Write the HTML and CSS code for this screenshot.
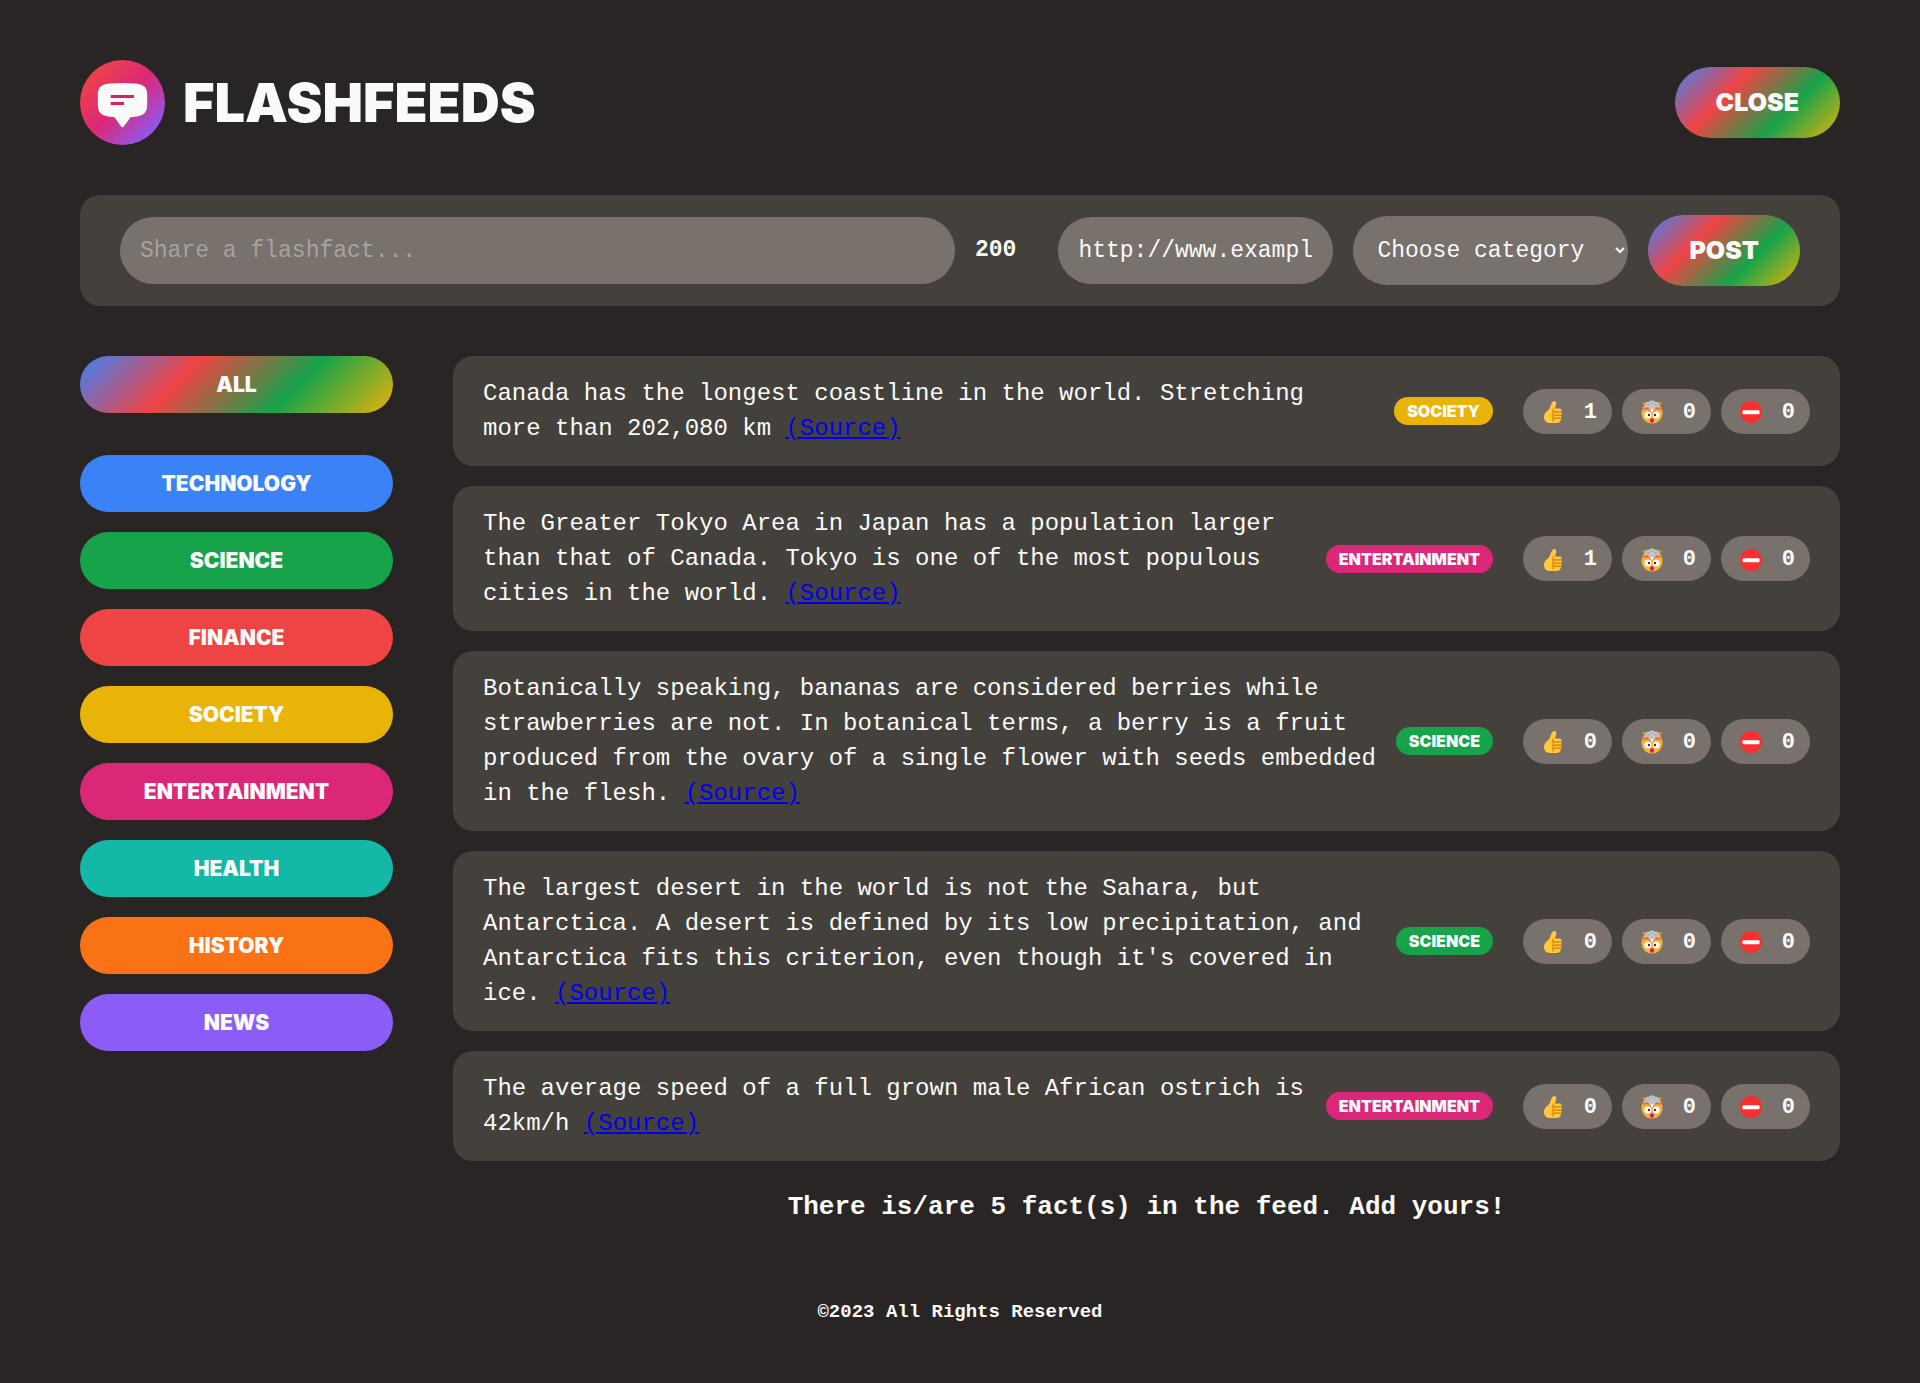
FILE: index.html
```html
<!DOCTYPE html>
<html lang="en">
<head>
<meta charset="utf-8">
<meta name="viewport" content="width=device-width, initial-scale=1">
<title>Flashfeeds</title>
<link rel="stylesheet" href="styles.css">
</head>
<body>
<svg class="sprite" width="0" height="0" aria-hidden="true">
  <defs>
    <symbol id="thumb" viewBox="0 0 22 24">
      <path d="M11.5 1.2c1.6-.6 3 .5 2.8 2.4-.2 1.900-.9 3.300-1.400 4.900h4.700c1.500 0 2.200 1 2 2.100 0 .6-.3 1-.6 1.300.6.400.9 1 .8 1.700-.1.700-.4 1.200-.8 1.500.4.500.6 1 .5 1.600-.1.700-.5 1.100-.9 1.400.3.500.4 1 .3 1.500-.3 1.500-1.200 3.400-3.600 3.400H8c-4 0-6-2.600-6-6 0-3.200 1.500-4.900 3.900-6.500C8.700 8.500 8.500 2.300 11.500 1.200z" fill="#ffc83d"/>
      <path d="M11 8.500v13M11 11.900h8M11 15.100h8M11 18.100h7.500" fill="none" stroke="#d67d00" stroke-width="1.100"/>
    </symbol>
    <symbol id="mindblown" viewBox="0 0 24 24">
      <path d="M1.500 12.500C1.500 9 3 8 4.500 8h15c1.500 0 3 1 3 4.500C22.500 19 18 23.500 12 23.500S1.500 19 1.500 12.500z" fill="#ffb02e"/>
      <path d="M3 10.800C5 8.500 8.500 8.500 10.500 12L12 11l1.500 1c2-3.500 5.500-3.500 7.500-1.200L19.500 8h-15z" fill="#f3602f"/>
      <path d="M2.500 2.500h3v2.500h-2zM18.500 2.500h3l-1 3h-2zM2.500 6.500h3v1.500h-3zM18.500 6.500h3v1.500h-3z" fill="#f59b23"/>
      <path d="M8.500 9.500c.5-1.500.5-2-1-2H5.500C3.500 7.500 3.500 5 5.500 4.500 5 2.500 7 1.500 8.500 2 9.500 0 14 0 15.500 2c1.600-.6 3.600.5 3 2.500 2 .5 2 3 0 3h-2c-1.500 0-1.500.5-1 2-1.500 1-5.500 1-7 0z" fill="#c4c4c4"/>
      <path d="M7 5c1-1 2-1 3 0M11 3.500c1-1 2-1 3 0M14 5.500c1-1 2-1 3 0" fill="none" stroke="#9b9b9b"/>
      <circle cx="12" cy="10.500" r="1.400" fill="#fff"/>
      <circle cx="7.800" cy="15" r="3.500" fill="#fff"/>
      <circle cx="16.200" cy="15" r="3.500" fill="#fff"/>
      <circle cx="9" cy="15" r="1.200" fill="#402a32"/>
      <circle cx="15" cy="15" r="1.200" fill="#402a32"/>
      <ellipse cx="12" cy="20.500" rx="2" ry="2.200" fill="#bb1d80"/>
    </symbol>
    <symbol id="noentry" viewBox="0 0 24 24">
      <circle cx="12" cy="12" r="11" fill="#f92f2f"/>
      <rect x="3.500" y="10.200" width="17" height="4" rx="1" fill="#fff"/>
    </symbol>
  </defs>
</svg>

<header class="header">
  <div class="brand">
    <svg class="logo" viewBox="0 0 85 85" role="img" aria-label="Flashfeeds logo">
      <defs>
        <linearGradient id="logo-fill" x1="0" y1="0" x2="1" y2="1">
          <stop offset="0.12" stop-color="#ef4444"/>
          <stop offset="0.5" stop-color="#db2777"/>
          <stop offset="0.88" stop-color="#8b5cf6"/>
        </linearGradient>
      </defs>
      <circle cx="42.500" cy="42.500" r="42.500" fill="url(#logo-fill)"/>
      <path d="M29 23.500Q42.500 22.300 56 23.500Q67.200 24.500 67.200 34V45Q67.200 55.500 57 56.600L50.500 57.200L44 66.300Q42.500 68 41 66.300L34.500 57.200L28 56.600Q17.800 55.500 17.800 45V34Q17.800 24.500 29 23.500Z" fill="#fafaf9"/>
      <path d="M30.700 36.500H54M30.700 43.500H44" stroke="#db1f6b" stroke-width="3.200"/>
    </svg>
    <h1 class="title">FLASHFEEDS</h1>
  </div>
  <button class="btn btn-large rainbow" type="button">CLOSE</button>
</header>

<form class="fact-form">
  <input class="field field-fact" type="text" aria-label="Fact" placeholder="Share a flashfact...">
  <span class="count">200</span>
  <input class="field field-side" type="text" aria-label="Source link" value="http://www.example.com">
  <select class="field field-side field-select" aria-label="Category">
    <option>Choose category</option>
    <option>Technology</option>
    <option>Science</option>
    <option>Finance</option>
    <option>Society</option>
    <option>Entertainment</option>
    <option>Health</option>
    <option>History</option>
    <option>News</option>
  </select>
  <button class="btn btn-large rainbow" type="button">POST</button>
</form>

<div class="content">
  <nav aria-label="Categories">
    <ul class="categories">
      <li class="all"><button class="btn btn-category rainbow" type="button">ALL</button></li>
      <li><button class="btn btn-category technology" type="button">TECHNOLOGY</button></li>
      <li><button class="btn btn-category science" type="button">SCIENCE</button></li>
      <li><button class="btn btn-category finance" type="button">FINANCE</button></li>
      <li><button class="btn btn-category society" type="button">SOCIETY</button></li>
      <li><button class="btn btn-category entertainment" type="button">ENTERTAINMENT</button></li>
      <li><button class="btn btn-category health" type="button">HEALTH</button></li>
      <li><button class="btn btn-category history" type="button">HISTORY</button></li>
      <li><button class="btn btn-category news" type="button">NEWS</button></li>
    </ul>
  </nav>

  <main>
    <ul class="facts">
      <li class="fact">
        <p class="fact-text">Canada has the longest coastline in the world. Stretching more&nbsp;than 202,080 km <a href="#">(Source)</a></p>
        <span class="tag society">SOCIETY</span>
        <div class="votes">
          <button class="vote" type="button"><svg><use href="#thumb"/></svg>1</button>
          <button class="vote" type="button"><svg><use href="#mindblown"/></svg>0</button>
          <button class="vote" type="button"><svg><use href="#noentry"/></svg>0</button>
        </div>
      </li>
      <li class="fact">
        <p class="fact-text">The Greater Tokyo Area in Japan has a population larger than that of Canada. Tokyo is one of the most populous cities in the world. <a href="#">(Source)</a></p>
        <span class="tag entertainment">ENTERTAINMENT</span>
        <div class="votes">
          <button class="vote" type="button"><svg><use href="#thumb"/></svg>1</button>
          <button class="vote" type="button"><svg><use href="#mindblown"/></svg>0</button>
          <button class="vote" type="button"><svg><use href="#noentry"/></svg>0</button>
        </div>
      </li>
      <li class="fact">
        <p class="fact-text">Botanically speaking, bananas are considered berries while strawberries are not. In botanical terms, a berry is a fruit produced from the ovary of a single flower with seeds embedded in the flesh. <a href="#">(Source)</a></p>
        <span class="tag science">SCIENCE</span>
        <div class="votes">
          <button class="vote" type="button"><svg><use href="#thumb"/></svg>0</button>
          <button class="vote" type="button"><svg><use href="#mindblown"/></svg>0</button>
          <button class="vote" type="button"><svg><use href="#noentry"/></svg>0</button>
        </div>
      </li>
      <li class="fact">
        <p class="fact-text">The largest desert in the world is not the Sahara, but Antarctica. A desert is defined by its low precipitation, and Antarctica fits this criterion, even though it's covered in ice. <a href="#">(Source)</a></p>
        <span class="tag science">SCIENCE</span>
        <div class="votes">
          <button class="vote" type="button"><svg><use href="#thumb"/></svg>0</button>
          <button class="vote" type="button"><svg><use href="#mindblown"/></svg>0</button>
          <button class="vote" type="button"><svg><use href="#noentry"/></svg>0</button>
        </div>
      </li>
      <li class="fact">
        <p class="fact-text">The average speed of a full grown male African ostrich is 42km/h <a href="#">(Source)</a></p>
        <span class="tag entertainment">ENTERTAINMENT</span>
        <div class="votes">
          <button class="vote" type="button"><svg><use href="#thumb"/></svg>0</button>
          <button class="vote" type="button"><svg><use href="#mindblown"/></svg>0</button>
          <button class="vote" type="button"><svg><use href="#noentry"/></svg>0</button>
        </div>
      </li>
    </ul>
    <p class="summary">There is/are 5 fact(s) in the feed. Add yours!</p>
  </main>
</div>

<footer class="footer">©2023 All Rights Reserved</footer>
</body>
</html>
```
FILE: styles.css
```css
*,
*::before,
*::after {
  box-sizing: border-box;
  margin: 0;
  padding: 0;
}

body {
  padding: 60px 80px 50px;
  background: #292524;
  color: #fafaf9;
  font-family: "Liberation Mono", "Courier New", monospace;
  font-size: 24px;
  line-height: 35px;
}

ul {
  list-style: none;
}

a {
  color: #0000ee;
}

.sprite {
  position: absolute;
}

/* Header */
.header {
  display: flex;
  align-items: center;
  justify-content: space-between;
  margin-bottom: 50px;
}

.brand {
  display: flex;
  align-items: center;
  gap: 18px;
}

.logo {
  display: block;
  width: 85px;
  height: 85px;
}

.title {
  font-family: Inter, sans-serif;
  font-size: 54px;
  font-weight: 900;
  line-height: 60px;
}

/* Buttons */
.btn {
  border: none;
  border-radius: 100px;
  color: inherit;
  font-family: Inter, sans-serif;
  font-weight: 900;
  text-align: center;
  cursor: pointer;
}

.btn-large {
  padding: 18px 41px;
  font-size: 25px;
  line-height: 35px;
}

.btn-category {
  display: block;
  width: 100%;
  padding: 16px;
  font-size: 21px;
  line-height: 25px;
}

.rainbow {
  background: linear-gradient(135deg, #3b82f6, #ef4444, #16a34a, #eab308);
}

.technology { background: #3b82f6; }
.science { background: #16a34a; }
.finance { background: #ef4444; }
.society { background: #eab308; }
.entertainment { background: #db2777; }
.health { background: #14b8a6; }
.history { background: #f97316; }
.news { background: #8b5cf6; }

/* New fact form */
.fact-form {
  display: flex;
  align-items: center;
  gap: 20px;
  margin-bottom: 50px;
  padding: 20px 40px;
  border-radius: 20px;
  background: #44403c;
}

.field {
  min-width: 0;
  padding: 17px 20px 15px;
  border: none;
  border-radius: 100px;
  background: #78716c;
  color: inherit;
  font-family: inherit;
  font-size: 23px;
  line-height: 35px;
}

.field::placeholder {
  color: #a8a29e;
}

.field-fact {
  flex: 1;
}

.field-side {
  width: 275px;
}

.field-select {
  padding: 21px 20px 20px;
}

.count {
  margin-right: 22px;
  font-size: 23px;
  font-weight: 700;
}

/* Categories and feed */
.content {
  display: grid;
  grid-template-columns: 313px 1fr;
  gap: 60px;
}

.categories,
.facts {
  display: flex;
  flex-direction: column;
  gap: 20px;
}

.all {
  margin-bottom: 22px;
}

.fact {
  display: flex;
  align-items: center;
  padding: 20px 30px;
  border-radius: 20px;
  background: #44403c;
}

.fact-text {
  flex: 1;
}

.tag {
  margin: 0 30px 0 16px;
  padding: 0 13px;
  border-radius: 100px;
  font-family: Inter, sans-serif;
  font-size: 16px;
  font-weight: 900;
  line-height: 28px;
}

.votes {
  display: flex;
  gap: 10px;
}

.vote {
  display: flex;
  align-items: center;
  justify-content: space-between;
  width: 89px;
  padding: 6px 15px 4px 18px;
  border: none;
  border-radius: 100px;
  background: #78716c;
  color: inherit;
  font-family: inherit;
  font-size: 22px;
  font-weight: 700;
  line-height: 35px;
  cursor: pointer;
}

.vote svg {
  width: 24px;
  height: 24px;
}

.summary {
  margin-top: 29px;
  font-size: 26px;
  font-weight: 700;
  text-align: center;
}

.footer {
  margin-top: 70px;
  font-size: 19px;
  font-weight: 700;
  text-align: center;
}
```
